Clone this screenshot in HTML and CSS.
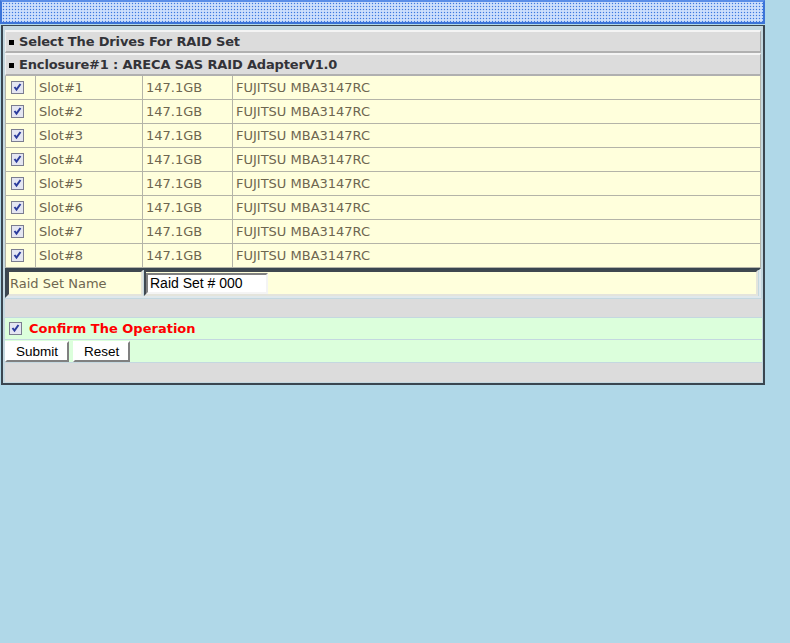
FILE: index.html
```html
<!DOCTYPE html>
<html lang="en">
<head>
  <meta charset="UTF-8">
  <title>Create Raid Set</title>
  <link rel="stylesheet" href="styles.css">
</head>
<body>
  <div class="topbar"></div>

  <div class="panel">
    <table class="drives">
      <tr><td colspan="4" class="head"><span class="bullet"></span>Select The Drives For RAID Set</td></tr>
      <tr><td colspan="4" class="head"><span class="bullet"></span>Enclosure#1 : ARECA SAS RAID AdapterV1.0</td></tr>
      <tr><td class="chk"><input type="checkbox" checked></td><td class="slot">Slot#1</td><td class="size">147.1GB</td><td>FUJITSU MBA3147RC</td></tr>
      <tr><td class="chk"><input type="checkbox" checked></td><td class="slot">Slot#2</td><td class="size">147.1GB</td><td>FUJITSU MBA3147RC</td></tr>
      <tr><td class="chk"><input type="checkbox" checked></td><td class="slot">Slot#3</td><td class="size">147.1GB</td><td>FUJITSU MBA3147RC</td></tr>
      <tr><td class="chk"><input type="checkbox" checked></td><td class="slot">Slot#4</td><td class="size">147.1GB</td><td>FUJITSU MBA3147RC</td></tr>
      <tr><td class="chk"><input type="checkbox" checked></td><td class="slot">Slot#5</td><td class="size">147.1GB</td><td>FUJITSU MBA3147RC</td></tr>
      <tr><td class="chk"><input type="checkbox" checked></td><td class="slot">Slot#6</td><td class="size">147.1GB</td><td>FUJITSU MBA3147RC</td></tr>
      <tr><td class="chk"><input type="checkbox" checked></td><td class="slot">Slot#7</td><td class="size">147.1GB</td><td>FUJITSU MBA3147RC</td></tr>
      <tr><td class="chk"><input type="checkbox" checked></td><td class="slot">Slot#8</td><td class="size">147.1GB</td><td>FUJITSU MBA3147RC</td></tr>
    </table>

    <div class="name-box">
      <div class="name-label">Raid Set Name</div>
      <div class="name-field"><input type="text" value="Raid Set # 000"></div>
    </div>

    <div class="gray-row"></div>
    <div class="confirm-row">
      <input type="checkbox" checked>
      <span class="confirm">Confirm The Operation</span>
    </div>
    <div class="button-row">
      <button>Submit</button>
      <button>Reset</button>
    </div>
    <div class="gray-row last"></div>
  </div>
</body>
</html>
```

FILE: styles.css
```css
html, body {
  margin: 0;
  padding: 0;
  background: #b0d8e8;
  font-family: 'DejaVu Sans', Verdana, sans-serif;
  font-size: 13px;
}

.topbar {
  width: 761px;
  height: 20px;
  border: 2px solid #3c74d8;
  border-top-color: #5a8ee8;
  background-color: #bcd4fa;
  background-image: radial-gradient(circle, #3e78dc 0.7px, transparent 0.9px),
                    radial-gradient(circle, #ffffff 0.6px, transparent 0.8px);
  background-size: 3px 3px, 3px 3px;
  background-position: 0 0, 1.5px 1.5px;
}

.panel {
  width: 757px;
  margin: 1px 0 0 1px;
  border: 2px solid #3a4650;
  border-top-width: 1px;
  background: #c4d8e0;
  padding: 4px 1px 1px 2px;
}

.drives {
  width: 756px;
  border-collapse: separate;
  border-spacing: 0;
}

.drives td {
  box-sizing: border-box;
  height: 24px;
  padding: 0 3px;
  background: #ffffdc;
  color: #6e6650;
  border-right: 1px solid #b4b4a8;
  border-bottom: 1px solid #b4b4a8;
  white-space: nowrap;
}

.drives td.head {
  height: 23px;
  background: #dcdcdc;
  color: #333338;
  font-weight: bold;
  letter-spacing: -0.15px;
  padding-left: 3px;
  border-top: 2px solid #f4f4f4;
  border-left: 1px solid #f0f0f0;
  border-bottom: 2px solid #b0b0b0;
  border-right: 1px solid #a8a8a8;
}

.bullet {
  display: inline-block;
  width: 5px;
  height: 5px;
  background: #000;
  margin-right: 5px;
  vertical-align: 1px;
}

.drives td.chk {
  width: 31px;
  padding: 0 0 0 5px;
  border-left: 1px solid #b4b4a8;
}

.drives td.slot { width: 107px; }
.drives td.size { width: 90px; }

.drives input,
.confirm-row input {
  appearance: none;
  box-sizing: border-box;
  width: 13px;
  height: 13px;
  margin: 0;
  vertical-align: -2px;
  border: 1px solid #7b7d90;
  background: #e4e6f2 url("data:image/svg+xml,%3Csvg xmlns='http://www.w3.org/2000/svg' width='11' height='11'%3E%3Cpath d='M2.5 5 L4.5 7.5 L8.5 2' fill='none' stroke='%232b3c9c' stroke-width='2'/%3E%3C/svg%3E") no-repeat center;
}

.name-box {
  display: flex;
  gap: 1px;
  width: 751px;
  padding: 0 1px 0 0;
  border: 2px solid #3a4650;
  border-right-color: #dfe8ec;
  border-bottom-color: #dfe8ec;
  background: #c4d8e0;
}

.name-label,
.name-field {
  box-sizing: border-box;
  height: 26px;
  background: #ffffdc;
  border: 2px solid #404850;
  border-right-color: #e4e4dc;
  border-bottom-color: #e4e4dc;
  display: flex;
  align-items: center;
}

.name-label {
  width: 136px;
  padding-left: 1px;
  color: #6e6650;
}

.name-field {
  flex: 1;
}

.name-field input {
  box-sizing: border-box;
  width: 122px;
  height: 21px;
  margin: 0;
  padding: 0 2px;
  border: 2px solid #808080;
  border-right-color: #f4f4f4;
  border-bottom-color: #f4f4f4;
  font-family: 'Liberation Sans', Arial, sans-serif;
  font-size: 14px;
  color: #000;
}

.gray-row {
  height: 18px;
  margin-top: 1px;
  background: #dcdcdc;
  width: 757px;
}

.gray-row.last {
  height: 19px;
}

.confirm-row {
  margin-top: 1px;
  width: 757px;
  height: 21px;
  background: #dcffdc;
  display: flex;
  align-items: center;
  gap: 7px;
  padding-left: 4px;
  box-sizing: border-box;
}

.confirm {
  color: #ff0000;
  font-weight: bold;
}

.button-row {
  margin-top: 1px;
  width: 757px;
  height: 22px;
  background: #dcffdc;
  display: flex;
  align-items: flex-start;
  gap: 4px;
}

.button-row button {
  height: 21px;
  margin: 1px 0 0;
  padding: 0 9px;
  background: #fff;
  border: 2px solid #fff;
  border-right-color: #808080;
  border-bottom-color: #808080;
  font-family: 'Liberation Sans', Arial, sans-serif;
  font-size: 13.5px;
  color: #000;
}
```
